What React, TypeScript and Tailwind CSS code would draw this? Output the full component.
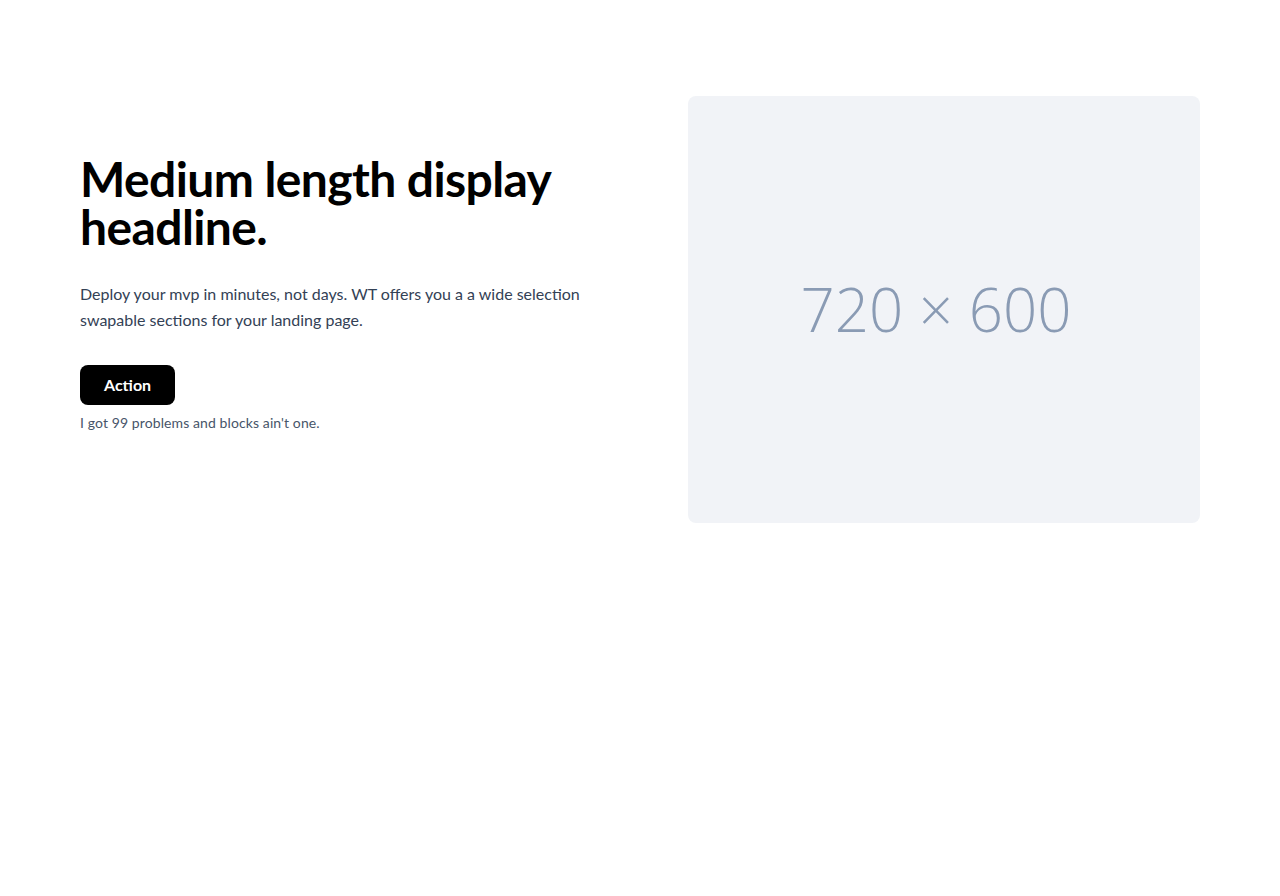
const Hero = () => {
  return (
    <section className="bg-white px-20 py-24" style={{ fontFamily: "Lato, 'Noto Sans', sans-serif" }}>
      <div className="grid grid-cols-2 items-center gap-24">

        {/* Left */}
        <div className="pb-[30px]">
          <h1 className="text-[48px] font-bold leading-[48px] tracking-[-0.6px] text-black">
            Medium length display
            <br />
            headline.
          </h1>

          <p className="mt-[30px] text-base leading-[26px] text-[#334155]">
            Deploy your mvp in minutes, not days. WT offers you a a wide selection swapable sections for your landing page.
          </p>

          <button className="mt-8 h-10 rounded-lg bg-black px-6 text-base font-bold text-white">
            Action
          </button>

          <p className="mt-2 text-sm leading-5 tracking-[0.1px] text-[#475569]">
            I got 99 problems and blocks ain't one.
          </p>
        </div>

        {/* Right */}
        <div className="flex aspect-[720/600] w-full items-center justify-center rounded-lg bg-[#f1f3f7] pr-4">
          <span
            className="text-[60px] font-light leading-none text-[#8a9bb4]"
            style={{ fontFamily: "'Open Sans', sans-serif" }}
          >
            720 × 600
          </span>
        </div>

      </div>
    </section>
  );
};

export default function App() {
  return <Hero />;
}
